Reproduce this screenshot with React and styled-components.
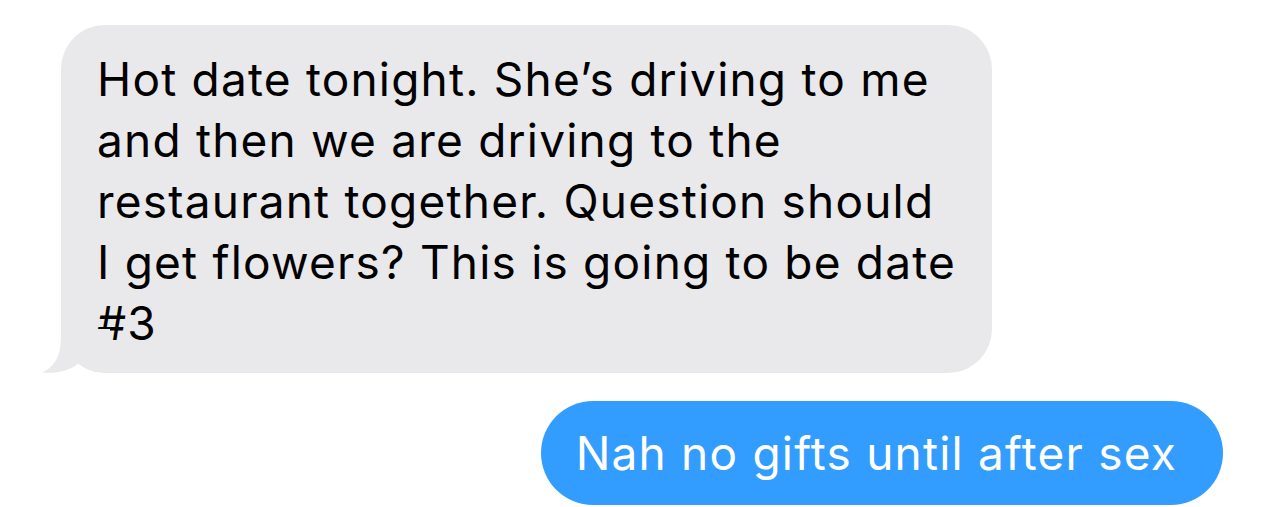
import React from "react";
import styled, { createGlobalStyle } from "styled-components";

const Global = createGlobalStyle`
  html, body { margin: 0; padding: 0; background: #ffffff; }
  body { font-family: Inter, "Liberation Sans", sans-serif; }
`;

const Thread = styled.div`
  width: 1284px;
  height: 507px;
  box-sizing: border-box;
  padding: 25px 61px 0 61px;
  display: flex;
  flex-direction: column;
  gap: 28px;
  overflow: hidden;
`;

const Row = styled.div`
  display: flex;
  justify-content: ${(p) => (p.$sent ? "flex-end" : "flex-start")};
`;

const Bubble = styled.div`
  position: relative;
  box-sizing: border-box;
  font-size: 46px;
  line-height: 61px;
  letter-spacing: 1.2px;
  white-space: nowrap;
  color: ${(p) => (p.$sent ? "#ffffff" : "#000000")};
  background: ${(p) => (p.$sent ? "#339cff" : "#e9e9eb")};
  border-radius: ${(p) => (p.$sent ? "52px" : "44px")};
`;

const Received = styled(Bubble)`
  width: 931px;
  padding: 24px 30px 19px 36px;
`;

const Sent = styled(Bubble)`
  height: 104px;
  display: flex;
  align-items: center;
  padding: 0 46px 0 35px;
`;

const Tail = styled.svg`
  position: absolute;
  left: -21px;
  bottom: 0;
  width: 70px;
  height: 44px;
  display: block;
`;

export default function App() {
  return (
    <>
      <Global />
      <Thread>
        <Row>
          <Received>
            Hot date tonight. She’s driving to me
            <br />
            and then we are driving to the
            <br />
            restaurant together. Question should
            <br />
            I get flowers? This is going to be date
            <br />
            #3
            <Tail viewBox="0 0 70 44">
              <path
                d="M21 0 L21 8 C21 26 15 38 2 43.5 C16 45 30 42 40 33 C50 40 60 44 70 44 L70 0 Z"
                fill="#e9e9eb"
              />
            </Tail>
          </Received>
        </Row>
        <Row $sent>
          <Sent $sent>Nah no gifts until after sex</Sent>
        </Row>
      </Thread>
    </>
  );
}
